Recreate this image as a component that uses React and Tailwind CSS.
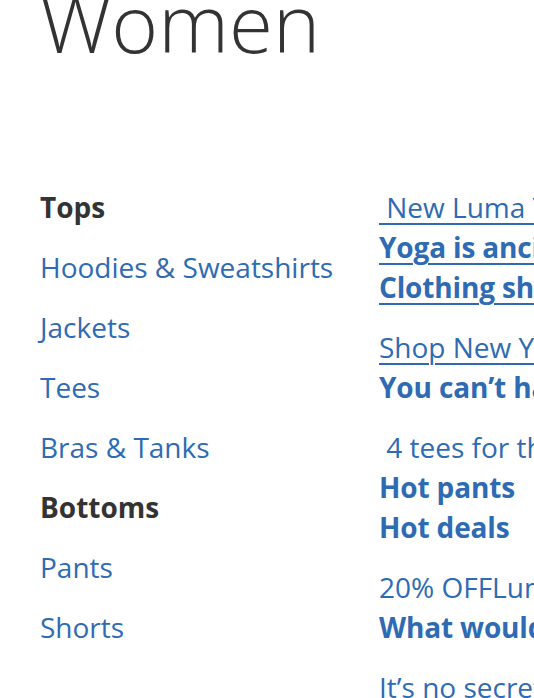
export default function App() {
  const leftItems = [
    { label: 'Tops', heading: true },
    { label: 'Hoodies & Sweatshirts' },
    { label: 'Jackets' },
    { label: 'Tees' },
    { label: 'Bras & Tanks' },
    { label: 'Bottoms', heading: true },
    { label: 'Pants' },
    { label: 'Shorts' },
  ];

  const bold = 'font-bold tracking-[-0.15px]';

  return (
    <div className="h-[698px] w-[534px] overflow-hidden bg-white pl-[40px] font-['Open_Sans',sans-serif] text-[28px] leading-[40px] text-[#333]">
      <h1 className="mt-[-22px] text-[80px] font-light leading-[88px] text-[#333]">Women</h1>

      <div className="mt-[121px] flex">
        <ul className="w-[339px] shrink-0">
          {leftItems.map((item) => (
            <li
              key={item.label}
              className={item.heading ? 'mb-[20px] font-bold text-[#333]' : 'mb-[20px] text-[#2e6bb3]'}
            >
              {item.label}
            </li>
          ))}
        </ul>

        <div className="min-w-0 flex-1 overflow-hidden whitespace-nowrap text-[#2e6bb3]">
          <p className="underline decoration-[2px] underline-offset-[5px]">
            <span className="whitespace-pre"> New Luma Yoga Collection</span>
            <br />
            <strong className={bold}>Yoga is ancient. Clothing shouldn’t be.</strong>
            <br />
            <strong className={bold}>Clothing should be comfortable</strong>
          </p>
          <p className="mt-[20px]">
            <span className="underline decoration-[2px] underline-offset-[5px]">Shop New Yoga</span>
            <br />
            <strong className={bold}>You can’t have too many</strong>
          </p>
          <p className="mt-[20px]">
            <span className="whitespace-pre"> 4 tees for the price of 3</span>
            <br />
            <strong className={bold}>Hot pants</strong>
            <br />
            <strong className={bold}>Hot deals</strong>
          </p>
          <p className="mt-[20px]">
            20% OFFLuma pants when you shop today*
            <br />
            <strong className={bold}>What would you like to do?</strong>
          </p>
          <p className="mt-[20px]">It’s no secret that yoga is good for you</p>
        </div>
      </div>
    </div>
  );
}
